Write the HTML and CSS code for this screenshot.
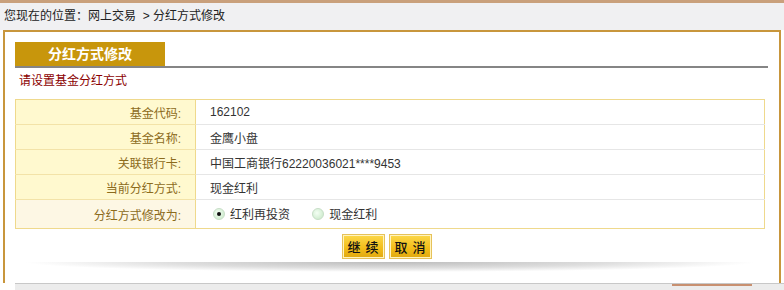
FILE: index.html
```html
<!DOCTYPE html>
<html lang="zh-CN">
<head>
  <meta charset="UTF-8" />
  <title>分红方式修改</title>
  <link rel="stylesheet" href="styles.css">
</head>
<body>
  <div class="topline"></div>
  <div class="crumb">您现在的位置：网上交易 &nbsp;&gt; 分红方式修改</div>

  <div class="panel">
    <div class="tab-bar">
      <div class="tab">分红方式修改</div>
    </div>
    <div class="hint">请设置基金分红方式</div>

    <table class="form-table">
      <tr>
        <td class="label">基金代码:</td>
        <td class="value">162102</td>
      </tr>
      <tr>
        <td class="label">基金名称:</td>
        <td class="value">金鹰小盘</td>
      </tr>
      <tr>
        <td class="label">关联银行卡:</td>
        <td class="value">中国工商银行62220036021****9453</td>
      </tr>
      <tr>
        <td class="label">当前分红方式:</td>
        <td class="value">现金红利</td>
      </tr>
      <tr class="last">
        <td class="label">分红方式修改为:</td>
        <td class="value">
          <label class="radio"><span class="dot checked"></span>红利再投资</label>
          <label class="radio"><span class="dot"></span>现金红利</label>
        </td>
      </tr>
    </table>

    <div class="actions">
      <button class="btn">继&nbsp;续</button>
      <button class="btn">取&nbsp;消</button>
    </div>
    <div class="shadow"></div>
  </div>
  <div class="footer">
    <div class="footer-tab"></div>
  </div>
</body>
</html>
```

FILE: styles.css
```css
body {
  margin: 0;
  padding: 0;
  font-family: "Liberation Sans", "Noto Sans CJK SC", sans-serif;
  font-size: 12px;
  color: #333;
  background: #fff;
  width: 784px;
  height: 290px;
  overflow: hidden;
}

.topline {
  height: 3px;
  background: #c9a07c;
}

.crumb {
  height: 27px;
  line-height: 27px;
  padding-left: 4px;
  background: #f0f0f2;
  color: #222;
}

.panel {
  margin: 0 3px;
  border: 2px solid #c8963c;
  border-bottom: none;
  padding: 10px 11px 0 10px;
  height: 241px;
}

.tab-bar {
  border-bottom: 2px solid #858585;
}
.tab {
  width: 150px;
  height: 24px;
  line-height: 24px;
  background: #c8960c;
  color: #fff;
  font-weight: bold;
  font-size: 14px;
  text-align: center;
}

.hint {
  height: 26px;
  line-height: 26px;
  padding-left: 4px;
  color: #8b0000;
}

.form-table {
  margin-top: 5px;
  width: 750px;
  border-collapse: collapse;
  border: 1px solid #efd98c;
}
.form-table td {
  height: 24px;
  padding: 0;
  border-bottom: 1px solid #e6e6e6;
}
.form-table .label {
  width: 165px;
  padding-right: 14px;
  text-align: right;
  background: #fff9cf;
  color: #8c6b1c;
  border-right: 1px solid #efd98c;
  border-bottom-color: #f3e3a8;
}
.form-table .value {
  padding-left: 14px;
  color: #333;
}
.form-table .last td {
  height: 28px;
  border-bottom: none;
}
.form-table .last .label {
  background: #fdf7e4;
}

.radio {
  display: inline-flex;
  align-items: center;
  margin-left: 3px;
  margin-right: 16px;
}
.dot {
  width: 10px;
  height: 10px;
  border-radius: 50%;
  background: radial-gradient(circle at 40% 40%, #f4fff4, #c4e6c4);
  border: 1px solid #c8dec8;
  margin-right: 5px;
  position: relative;
}
.dot.checked::after {
  content: "";
  position: absolute;
  left: 3px;
  top: 3px;
  width: 4px;
  height: 4px;
  border-radius: 50%;
  background: #111;
}

.actions {
  width: 750px;
  display: flex;
  justify-content: center;
  gap: 4px;
  margin-top: 5px;
  padding-right: 6px;
  box-sizing: border-box;
}
.btn {
  width: 43px;
  height: 25px;
  padding: 0;
  border: 1px solid #e6c25a;
  outline: 1px solid #fff3c0;
  outline-offset: -2px;
  background: linear-gradient(#fcd84a, #f2bc18 60%, #e0a810);
  font-family: "Noto Sans CJK SC", sans-serif;
  font-size: 13px;
  font-weight: 500;
  letter-spacing: 1px;
  color: #111;
  cursor: pointer;
}

.shadow {
  margin: 3px 0 0 10px;
  width: 730px;
  height: 10px;
  background: radial-gradient(ellipse 50% 100% at 50% 0%, #bcbcbc, #dedede 60%, rgba(255,255,255,0) 100%);
}

.footer {
  height: 7px;
  border-top: 1px solid #c8c8c8;
  background: #ececec;
  margin-left: 15px;
  position: relative;
}
.footer-tab {
  position: absolute;
  left: 657px;
  top: 0;
  width: 80px;
  height: 2px;
  background: #c89070;
}
```
